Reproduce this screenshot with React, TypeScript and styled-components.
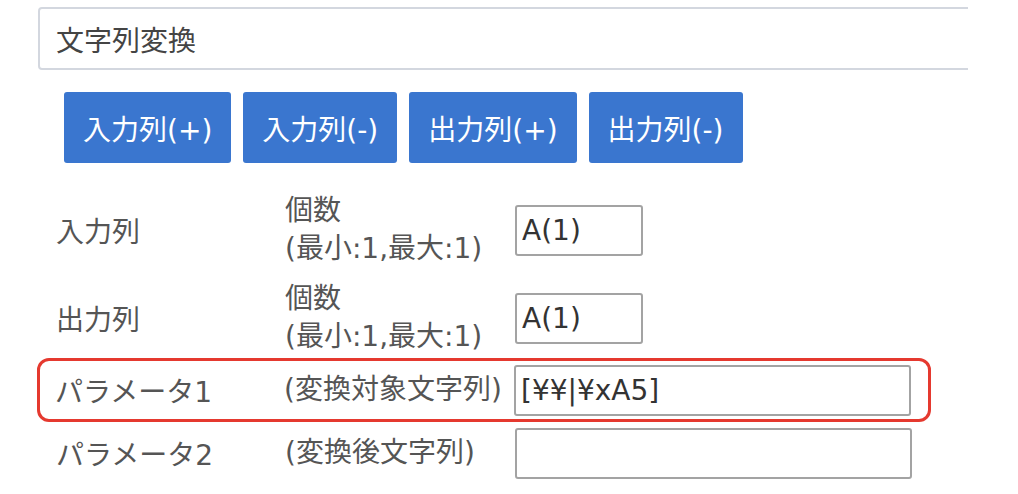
import React from "react";
import styled, { createGlobalStyle } from "styled-components";

const GlobalStyle = createGlobalStyle`
  body {
    margin: 0;
    background: #ffffff;
    font-family: "DejaVu Sans", "Noto Sans CJK JP", sans-serif;
  }
`;

const Page = styled.div`
  width: 1018px;
  height: 494px;
  overflow: hidden;
  padding: 7px 0 0 38px;
  box-sizing: border-box;
`;

const TitleClip = styled.div`
  width: 930px;
  overflow: hidden;
`;

const TitleInput = styled.input`
  width: 980px;
  height: 63px;
  box-sizing: border-box;
  border: 2px solid #d3d7df;
  border-radius: 4px;
  padding: 0 0 0 16px;
  font-family: inherit;
  font-size: 28px;
  color: #444444;
  outline: none;
`;

const Toolbar = styled.div`
  display: flex;
  gap: 12px;
  margin: 22px 0 0 26px;
`;

const ActionButton = styled.button`
  height: 71px;
  padding: 0 19px;
  border: none;
  border-radius: 3px;
  background: #3a76cf;
  color: #ffffff;
  font-family: inherit;
  font-size: 28px;
  cursor: pointer;
`;

const Rows = styled.div`
  display: flex;
  flex-direction: column;
  margin-top: 27px;
`;

const FieldRow = styled.div<{ $height: number; $space?: number; $highlight?: boolean }>`
  display: grid;
  grid-template-columns: 229px 230px auto;
  align-items: center;
  height: ${(p) => p.$height}px;
  margin-top: ${(p) => p.$space ?? 0}px;
  box-sizing: border-box;
  width: 894px;
  padding-left: ${(p) => (p.$highlight ? 15 : 18)}px;
  border: ${(p) => (p.$highlight ? "3px solid #e5392f" : "none")};
  border-radius: 12px;
  margin-left: ${(p) => (p.$highlight ? -1 : 0)}px;
`;

const Label = styled.span`
  font-size: 28px;
  color: #555555;
  white-space: nowrap;
`;

const Note = styled.div`
  font-size: 28px;
  line-height: 38px;
  color: #555555;
  white-space: nowrap;
`;

const ValueInput = styled.input<{ $wide?: boolean }>`
  width: ${(p) => (p.$wide ? 397 : 128)}px;
  height: 51px;
  box-sizing: border-box;
  border: 2px solid #a3a3a3;
  border-radius: 3px;
  padding: 0 0 0 5px;
  font-family: inherit;
  font-size: 28px;
  color: #333333;
  outline: none;
`;

export default function App() {
  return (
    <Page>
      <GlobalStyle />
      <TitleClip>
        <TitleInput defaultValue="文字列変換" />
      </TitleClip>
      <Toolbar>
        <ActionButton>入力列(+)</ActionButton>
        <ActionButton>入力列(-)</ActionButton>
        <ActionButton>出力列(+)</ActionButton>
        <ActionButton>出力列(-)</ActionButton>
      </Toolbar>
      <Rows>
        <FieldRow $height={80}>
          <Label>入力列</Label>
          <Note>
            個数
            <br />
            (最小:1,最大:1)
          </Note>
          <ValueInput defaultValue="A(1)" />
        </FieldRow>
        <FieldRow $height={80} $space={8}>
          <Label>出力列</Label>
          <Note>
            個数
            <br />
            (最小:1,最大:1)
          </Note>
          <ValueInput defaultValue="A(1)" />
        </FieldRow>
        <FieldRow $height={64} $highlight>
          <Label>パラメータ1</Label>
          <Note>(変換対象文字列)</Note>
          <ValueInput $wide defaultValue="[¥¥|¥xA5]" />
        </FieldRow>
        <FieldRow $height={62}>
          <Label>パラメータ2</Label>
          <Note>(変換後文字列)</Note>
          <ValueInput $wide />
        </FieldRow>
      </Rows>
    </Page>
  );
}
